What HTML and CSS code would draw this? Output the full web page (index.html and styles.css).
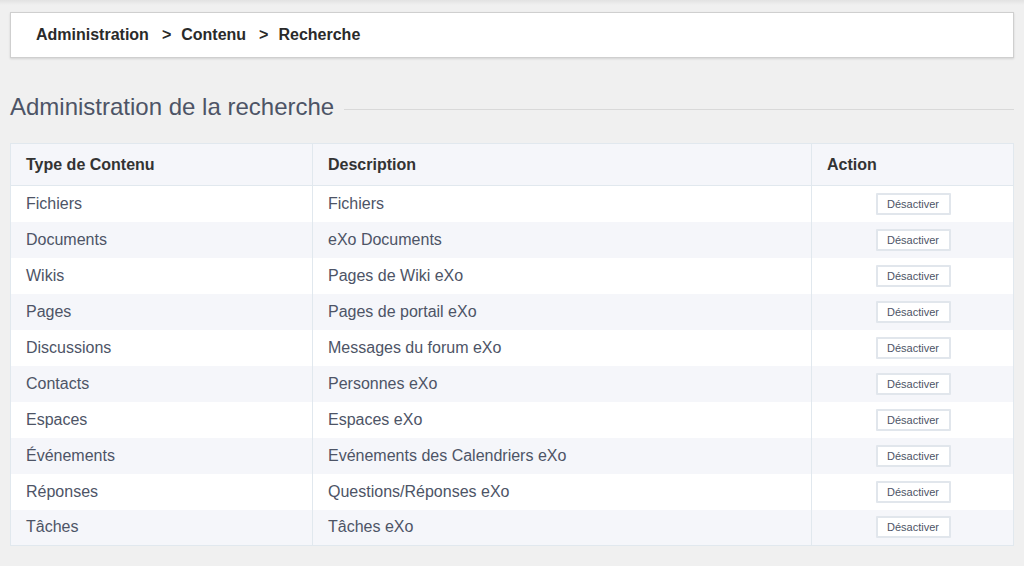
FILE: index.html
```html
<!DOCTYPE html>
<html lang="fr">
<head>
<meta charset="utf-8">
<title>Administration de la recherche</title>
<link rel="stylesheet" href="styles.css">
</head>
<body>
<div class="topshade"></div>
<div class="page">
  <div class="breadcrumb">
    <span class="crumb">Administration</span>
    <span class="sep">&gt;</span>
    <span class="crumb">Contenu</span>
    <span class="sep">&gt;</span>
    <span class="crumb">Recherche</span>
  </div>
  <div class="title-row">
    <h2 class="title">Administration de la recherche</h2>
    <div class="title-line"></div>
  </div>
  <table class="grid">
    <thead>
      <tr><th class="c1">Type de Contenu</th><th class="c2">Description</th><th class="c3">Action</th></tr>
    </thead>
    <tbody>
      <tr><td>Fichiers</td><td>Fichiers</td><td class="act"><button class="btn">Désactiver</button></td></tr>
      <tr><td>Documents</td><td>eXo Documents</td><td class="act"><button class="btn">Désactiver</button></td></tr>
      <tr><td>Wikis</td><td>Pages de Wiki eXo</td><td class="act"><button class="btn">Désactiver</button></td></tr>
      <tr><td>Pages</td><td>Pages de portail eXo</td><td class="act"><button class="btn">Désactiver</button></td></tr>
      <tr><td>Discussions</td><td>Messages du forum eXo</td><td class="act"><button class="btn">Désactiver</button></td></tr>
      <tr><td>Contacts</td><td>Personnes eXo</td><td class="act"><button class="btn">Désactiver</button></td></tr>
      <tr><td>Espaces</td><td>Espaces eXo</td><td class="act"><button class="btn">Désactiver</button></td></tr>
      <tr><td>Événements</td><td>Evénements des Calendriers eXo</td><td class="act"><button class="btn">Désactiver</button></td></tr>
      <tr><td>Réponses</td><td>Questions/Réponses eXo</td><td class="act"><button class="btn">Désactiver</button></td></tr>
      <tr><td>Tâches</td><td>Tâches eXo</td><td class="act"><button class="btn">Désactiver</button></td></tr>
    </tbody>
  </table>
</div>
</body>
</html>
```
FILE: styles.css
```css
html, body {
  margin: 0;
  padding: 0;
  background: #f0f0f0;
  font-family: "Liberation Sans", Arial, Helvetica, sans-serif;
  color: #4d5466;
}
.topshade {
  height: 5px;
  margin-bottom: -5px;
  background: linear-gradient(#e2e2e2, rgba(240,240,240,0));
}
.page {
  padding: 12px 10px 0 10px;
}
.breadcrumb {
  background: #fff;
  border: 1px solid #cfcfcf;
  box-shadow: 0 1px 2px rgba(0,0,0,0.12);
  height: 44px;
  box-sizing: content-box;
  display: flex;
  align-items: center;
  padding-left: 25px;
  font-size: 16px;
  font-weight: bold;
  color: #2a2a2a;
}
.sep {
  margin: 0 10px 0 13px;
}
.title-row {
  display: flex;
  align-items: center;
  margin-top: 34px;
  height: 30px;
}
.title {
  margin: 0;
  font-size: 24px;
  font-weight: normal;
  color: #4d5466;
  line-height: 30px;
  white-space: nowrap;
}
.title-line {
  flex: 1;
  height: 1px;
  background: #d9d9d9;
  margin-left: 10px;
  margin-top: 4px;
}
.grid {
  margin-top: 21px;
  width: 100%;
  border-collapse: collapse;
  border: 1px solid #e1e8ee;
  font-size: 16px;
}
.grid th {
  text-align: left;
  font-weight: bold;
  color: #333;
  background: #f5f6fa;
  height: 42px;
  padding: 0 15px;
  border: 1px solid #e1e8ee;
  box-sizing: border-box;
}
.grid .c1 { width: 302px; }
.grid .c2 { width: 499px; }
.grid td {
  height: 36px;
  padding: 0 15px;
  border-left: 1px solid #e1e8ee;
  border-right: 1px solid #e1e8ee;
  box-sizing: border-box;
  color: #4d5466;
}
.grid tbody tr:nth-child(even) td {
  background: #f5f6fa;
}
.grid tbody tr:nth-child(odd) td {
  background: #fff;
}
.grid td.act {
  text-align: center;
}
.btn {
  font-family: "Liberation Sans", Arial, sans-serif;
  font-size: 11px;
  color: #4d5466;
  background: #fff;
  border: 2px solid #e1e6ec;
  border-radius: 1px;
  height: 22px;
  width: 75px;
  padding: 0;
  margin-left: 1px;
  vertical-align: middle;
}
```
